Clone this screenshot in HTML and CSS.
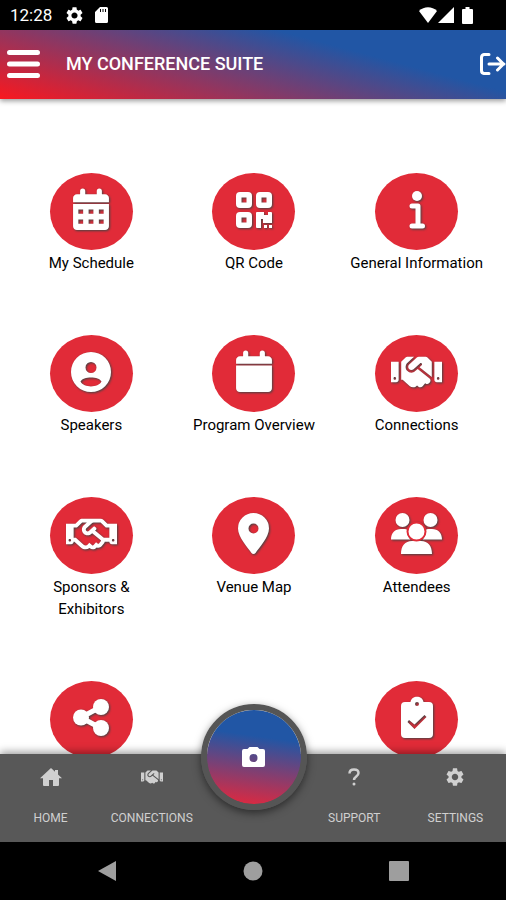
FILE: index.html
```
<!DOCTYPE html>
<html lang="en">
<head>
    <meta charset="UTF-8">
    <meta name="viewport" content="width=device-width, initial-scale=1">
    <title>My Conference Suite</title>
    <link rel="stylesheet" href="styles.css">
</head>
<body>

<!-- shared icons -->
<svg class="sprite" aria-hidden="true">
    <symbol id="gear" viewBox="2 2 20 20">
        <path d="M19.14 12.94c.04-.3.06-.61.06-.94 0-.32-.02-.64-.07-.94l2.03-1.58c.18-.14.23-.41.12-.61l-1.92-3.32c-.12-.22-.37-.29-.59-.22l-2.39.96c-.5-.38-1.03-.7-1.62-.94l-.36-2.54c-.04-.24-.24-.41-.48-.41h-3.84c-.24 0-.43.17-.47.41l-.36 2.54c-.59.24-1.13.57-1.62.94l-2.39-.96c-.22-.08-.47 0-.59.22L2.74 8.87c-.12.21-.08.47.12.61l2.03 1.58c-.05.3-.09.63-.09.94s.02.64.07.94l-2.03 1.58c-.18.14-.23.41-.12.61l1.92 3.32c.12.22.37.29.59.22l2.39-.96c.5.38 1.03.7 1.62.94l.36 2.54c.05.24.24.41.48.41h3.84c.24 0 .44-.17.47-.41l.36-2.54c.59-.24 1.13-.56 1.62-.94l2.39.96c.22.08.47 0 .59-.22l1.92-3.32c.12-.22.07-.47-.12-.61l-2.01-1.58zM12 15.6c-1.98 0-3.6-1.62-3.6-3.6s1.62-3.6 3.6-3.6 3.6 1.62 3.6 3.6-1.62 3.6-3.6 3.6z"/>
    </symbol>
    <symbol id="handshake" viewBox="0 56 640 400">
        <path d="M434.7 64h-85.9c-8 0-15.7 3-21.6 8.4l-98.3 90c-.1.1-.2.3-.3.4-16.6 15.6-16.3 40.5-2.1 56 12.7 13.9 39.4 17.6 56.1 2.7.1-.1.3-.1.4-.2l79.9-73.2c6.5-5.9 16.7-5.5 22.6 1 6 6.5 5.5 16.6-1 22.6l-26.1 23.9L504 313.8c2.9 2.4 5.5 5 7.9 7.7V128l-54.6-54.6c-5.9-6-14.1-9.4-22.6-9.4zM544 128.2v223.9c0 17.7 14.3 32 32 32h64V128.2h-96zm48 223.9c-8.8 0-16-7.2-16-16s7.2-16 16-16 16 7.2 16 16-7.2 16-16 16zM0 384h64c17.7 0 32-14.3 32-32V128.2H0V384zm48-63.9c8.8 0 16 7.2 16 16s-7.2 16-16 16-16-7.2-16-16c0-8.9 7.2-16 16-16zm435.9 18.6L334.6 217.5l-30 27.5c-29.7 27.1-75.2 24.5-101.7-4.4-26.9-29.4-24.8-74.9 4.4-101.7L289.1 64h-83.8c-8.5 0-16.6 3.4-22.6 9.4L128 128v223.9h18.3l90.5 81.9c27.4 22.3 67.7 18.1 90-9.3l.2-.2 17.9 15.5c15.9 13 39.4 10.5 52.3-5.4l31.4-38.6 5.4 4.4c13.7 11.1 33.9 9.1 45-4.7l9.5-11.7c11.2-13.8 9.1-33.9-4.6-45.1z"/>
    </symbol>
</svg>

<div class="status-bar">
    <span class="time">12:28</span>
    <svg class="status-gear" width="17" height="17"><use href="#gear"/></svg>
    <svg width="13" height="16" viewBox="0 0 13 16"><path fill-rule="evenodd" d="M5 0h6.500a1.500 1.500 0 0 1 1.500 1.500v13a1.500 1.500 0 0 1-1.500 1.500h-10A1.500 1.500 0 0 1 0 14.500V5zM5 2v3h1V2zM7.500 2v3h1V2zM10 2v3h1V2z"/></svg>
    <div class="signals">
        <svg width="18" height="16" viewBox="0 0 18 16"><path d="M0 4C5-1 13-1 18 4L9 16z"/></svg>
        <svg width="16" height="16" viewBox="0 0 16 16"><path d="M16 0v16H0z"/></svg>
        <svg class="battery" width="11" height="17" viewBox="0 0 11 17"><path d="M3.500 0h4v2H10a1 1 0 0 1 1 1v13a1 1 0 0 1-1 1H1a1 1 0 0 1-1-1V3a1 1 0 0 1 1-1h2.500z"/></svg>
    </div>
</div>

<header class="header">
    <button class="icon-button" aria-label="Menu">
        <svg width="33" height="30" viewBox="0 0 33 30"><path class="line" stroke-width="5" d="M2.500 3.500h28M2.500 15h28M2.500 26.500h28"/></svg>
    </button>
    <h1>MY CONFERENCE SUITE</h1>
    <button class="icon-button" aria-label="Log out">
        <svg width="26" height="22" viewBox="0 0 26 22"><path class="line" stroke-width="3" d="M9 1.500H4A3 3 0 0 0 1.500 4.500v13a3 3 0 0 0 2.500 3h5M9 11h15M17.500 5l6 6-6 6"/></svg>
    </button>
</header>

<main class="content">
    <nav class="menu">
        <a class="item" href="#schedule">
            <span class="circle">
                <svg width="36" height="41" viewBox="0 0 448 512"><path fill-rule="evenodd" d="M0 464c0 26.500 21.500 48 48 48h352c26.500 0 48-21.500 48-48V188H0zM66 256h60v52H66zM194 256h60v52h-60zM322 256h60v52h-60zM66 382h60v52H66zM194 382h60v52h-60zM322 382h60v52h-60zM400 64h-40V26a32 32 0 0 0-64 0v38H152V26a32 32 0 0 0-64 0v38H48C21.500 64 0 85.500 0 112v52h448v-52c0-26.500-21.500-48-48-48z"/></svg>
            </span>
            <span class="name">My Schedule</span>
        </a>
        <a class="item" href="#qr">
            <span class="circle">
                <svg width="36" height="36" viewBox="0 0 36 36"><path fill-rule="evenodd" d="M4 0h8a4 4 0 0 1 4 4v8a4 4 0 0 1-4 4H4a4 4 0 0 1-4-4V4a4 4 0 0 1 4-4zM5.500 5.500v5h5v-5zM24 0h8a4 4 0 0 1 4 4v8a4 4 0 0 1-4 4h-8a4 4 0 0 1-4-4V4a4 4 0 0 1 4-4zM25.500 5.500v5h5v-5zM4 20h8a4 4 0 0 1 4 4v8a4 4 0 0 1-4 4H4a4 4 0 0 1-4-4v-8a4 4 0 0 1 4-4zM5.500 25.500v5h5v-5zM21 20h7v3h4v-3h3a1 1 0 0 1 1 1v10h-9v-4h-2v9h-4a1 1 0 0 1-1-1V21a1 1 0 0 1 1-1zM28 33h3v3h-3zM33 33h3v3h-3z"/></svg>
            </span>
            <span class="name">QR Code</span>
        </a>
        <a class="item" href="#info">
            <span class="circle">
                <svg width="16" height="38" viewBox="0 0 16 38"><circle cx="8" cy="5" r="5"/><path class="line" stroke-width="5" d="M3 15h6v20M3 35h10.500"/></svg>
            </span>
            <span class="name">General Information</span>
        </a>
        <a class="item" href="#speakers">
            <span class="circle">
                <svg width="40" height="40" viewBox="0 0 40 40"><path fill-rule="evenodd" d="M20 0a20 20 0 1 0 0 40 20 20 0 0 0 0-40zM20 10a5.500 5.500 0 1 1 0 11 5.500 5.500 0 0 1 0-11zM9.500 29.500C12 24 28 24 30.500 29.500 27 36 13 36 9.500 29.500z"/></svg>
            </span>
            <span class="name">Speakers</span>
        </a>
        <a class="item" href="#program">
            <span class="circle">
                <svg width="36" height="41" viewBox="0 0 448 512"><path d="M0 464c0 26.500 21.500 48 48 48h352c26.500 0 48-21.500 48-48V180H0zM400 64h-40V26a32 32 0 0 0-64 0v38H152V26a32 32 0 0 0-64 0v38H48C21.500 64 0 85.500 0 112v46h448v-46c0-26.500-21.500-48-48-48z"/></svg>
            </span>
            <span class="name">Program Overview</span>
        </a>
        <a class="item" href="#connections">
            <span class="circle">
                <svg width="51" height="32"><use href="#handshake"/></svg>
            </span>
            <span class="name">Connections</span>
        </a>
        <a class="item" href="#sponsors">
            <span class="circle">
                <svg width="51" height="32" viewBox="0 56 640 400"><path d="M519.200 127.900l-47.600-47.600A56.252 56.252 0 0 0 432 64H205.200c-14.800 0-29.100 5.900-39.600 16.300L118 127.900H0v255.700h64c17.600 0 31.800-14.200 31.900-31.700h9.100l84.600 76.400c30.900 25.100 73.800 25.700 105.600 3.800 12.500 10.800 26 15.900 41.100 15.900 18.200 0 35.300-7.400 48.800-24 22.100 8.700 48.200 2.600 64-16.800l26.200-32.300c5.600-6.900 9.100-14.800 10.900-23h57.900c.1 17.500 14.400 31.700 31.900 31.700h64V127.900H519.200zM48 351.600c-8.800 0-16-7.200-16-16s7.200-16 16-16 16 7.200 16 16c0 8.900-7.200 16-16 16zm390-6.900l-26.100 32.200c-2.800 3.400-7.800 4-11.300 1.200l-23.900-19.400-30 36.500c-6 7.300-15 4.800-18 2.400l-36.800-31.500-15.600 19.200c-13.900 17.100-39.200 19.700-55.300 6.600l-97.300-88H96V175.800h41.900l61.700-61.600c2-.8 3.700-1.500 5.700-2.300H262l-38.700 35.500c-29.400 26.900-31.100 72.300-4.400 101.300 14.800 16.200 61.200 41.200 101.500 4.400l8.200-7.500 108.200 87.800c3.400 2.800 3.900 7.900 1.200 11.300zm106-40.800h-69.200c-2.300-2.800-4.900-5.400-7.700-7.700l-102.700-83.400 12.500-11.400c6.500-6 7-16.100 1-22.600L367 167.100c-6-6.500-16.100-6.900-22.600-1l-55.200 50.600c-9.500 8.700-25.700 9.400-34.600 0-9.300-9.900-8.500-25.100 1.200-33.900l65.600-60.100c7.400-6.800 17-10.500 27-10.500l83.700-.2c2.100 0 4.100.8 5.500 2.300l61.700 61.600H544v128zm48 47.700c-8.800 0-16-7.200-16-16s7.200-16 16-16 16 7.200 16 16c0 8.900-7.200 16-16 16z"/></svg>
            </span>
            <span class="name">Sponsors &amp;<br>Exhibitors</span>
        </a>
        <a class="item" href="#venue">
            <span class="circle">
                <svg width="31" height="41" viewBox="0 0 31 41"><path fill-rule="evenodd" d="M15.500 0A15.500 15.500 0 0 0 0 15.500C0 24 10 35 13.500 40a2.500 2.500 0 0 0 4 0C21 35 31 24 31 15.500A15.500 15.500 0 0 0 15.500 0zM15.500 10.500a5 5 0 1 1 0 10 5 5 0 0 1 0-10z"/></svg>
            </span>
            <span class="name">Venue Map</span>
        </a>
        <a class="item" href="#attendees">
            <span class="circle">
                <svg width="51" height="41" viewBox="0 0 51 41"><circle cx="11.500" cy="7" r="7"/><circle cx="39.500" cy="7" r="7"/><path d="M0 26.500C0 20 4 16 10 16h3c1.500 0 2.500.2 3.500.7-.6 4 .5 7.300 3 9.800zM51 26.500C51 20 47 16 41 16h-3c-1.500 0-2.500.2-3.500.7.6 4-.5 7.300-3 9.800zM10 41c0-8 4-13 11-13h9c7 0 11 5 11 13z"/><circle class="front-head" cx="25.500" cy="18.500" r="9"/></svg>
            </span>
            <span class="name">Attendees</span>
        </a>
        <a class="item" href="#share" aria-label="Share">
            <span class="circle">
                <svg width="36" height="37" viewBox="0 0 36 37"><path class="line" stroke-width="5" d="M27.500 8L8 18.500l19.500 10.500"/><circle cx="8" cy="18.500" r="8"/><circle cx="28" cy="8" r="8"/><circle cx="28" cy="29" r="8"/></svg>
            </span>
        </a>
        <a class="item last" href="#survey" aria-label="Survey">
            <span class="circle">
                <svg width="32" height="41" viewBox="0 0 32 41"><path fill-rule="evenodd" d="M4 5h5.500c1-7 12-7 13 0H28a4 4 0 0 1 4 4v28a4 4 0 0 1-4 4H4a4 4 0 0 1-4-4V9a4 4 0 0 1 4-4zM16 5a2 2 0 1 0 0 4 2 2 0 0 0 0-4zM8 23l-1.500 2 7 7L25.500 20l-2-2-10 9.500z"/></svg>
            </span>
        </a>
    </nav>
</main>

<footer class="tabs">
    <a class="tab" href="#home">
        <svg width="22" height="18" viewBox="0 0 22 18"><path d="M11 0l4 3.700V2h3v4.500l4 3.700h-3V17a1 1 0 0 1-1 1h-5v-6H9v6H4a1 1 0 0 1-1-1v-6.800H0z"/></svg>
        <span>HOME</span>
    </a>
    <a class="tab" href="#connections">
        <svg width="22" height="18"><use href="#handshake"/></svg>
        <span>CONNECTIONS</span>
    </a>
    <div class="camera-slot">
        <button class="camera" aria-label="Camera">
            <svg width="23" height="20" viewBox="0 0 23 20"><path fill-rule="evenodd" d="M7.500 0h8l2 2H21a2 2 0 0 1 2 2v14a2 2 0 0 1-2 2H2a2 2 0 0 1-2-2V4a2 2 0 0 1 2-2h3.500zM11.500 7a4 4 0 1 0 0 8 4 4 0 0 0 0-8z"/></svg>
        </button>
    </div>
    <a class="tab" href="#support">
        <svg width="12" height="18" viewBox="0 0 12 18"><path class="line butt" stroke-width="2.500" d="M1.500 5.500C1.500 3 3 1.500 6 1.500s4.500 1.500 4.500 3.500c0 3.500-4.500 3.500-4.500 7"/><circle cx="6" cy="16" r="1.500"/></svg>
        <span>SUPPORT</span>
    </a>
    <a class="tab" href="#settings">
        <svg width="18" height="18"><use href="#gear"/></svg>
        <span>SETTINGS</span>
    </a>
</footer>

<div class="system-nav">
    <button aria-label="Back"><svg width="18" height="20" viewBox="0 0 18 20"><path d="M18 0v20L0 10z"/></svg></button>
    <button aria-label="Home screen"><svg width="20" height="20" viewBox="0 0 20 20"><circle cx="10" cy="10" r="9.500"/></svg></button>
    <button aria-label="Recent apps"><svg width="20" height="20" viewBox="0 0 20 20"><rect width="20" height="20" rx="1"/></svg></button>
</div>

</body>
</html>
```
FILE: styles.css
```
* {
    box-sizing: border-box;
}

body {
    margin: 0;
    height: 100vh;
    display: flex;
    flex-direction: column;
    font-family: Roboto, sans-serif;
    background: white;
    color: black;
}

a {
    color: inherit;
    text-decoration: none;
}

button {
    border: 0;
    padding: 0;
    background: none;
    color: inherit;
    cursor: pointer;
}

svg {
    display: block;
    fill: currentColor;
}

.line {
    fill: none;
    stroke: currentColor;
    stroke-linecap: round;
    stroke-linejoin: round;
}

.butt {
    stroke-linecap: butt;
}

.sprite {
    position: absolute;
    width: 0;
    height: 0;
}

/* phone status bar */
.status-bar {
    flex: none;
    height: 30px;
    padding: 0 33px 0 10px;
    display: flex;
    align-items: center;
    background: black;
    color: white;
}

.status-bar .time {
    font-size: 17px;
    line-height: 30px;
}

.status-bar .status-gear {
    margin: 0 12px 0 14px;
}

.status-bar .signals {
    margin-left: auto;
    display: flex;
    gap: 1px;
}

.status-bar .battery {
    margin-left: 7px;
}

.header {
    flex: none;
    height: 69px;
    padding: 0 0 2px 7px;
    display: flex;
    align-items: center;
    background: linear-gradient(15deg, #f9181f, #2156a5 70%);
    color: white;
    box-shadow: 0 2px 5px rgba(0, 0, 0, 0.4);
    z-index: 1;
}

.header h1 {
    flex: 1;
    margin: 0 0 0 26px;
    font-size: 18px;
    font-weight: 500;
}

/* grid of round buttons */
.content {
    flex: 1;
    min-height: 0;
    overflow: hidden;
}

.menu {
    display: grid;
    grid-template-columns: repeat(3, 1fr);
    row-gap: 61px;
    padding: 74px 8px 74px 10px;
}

.item {
    display: flex;
    flex-direction: column;
    align-items: center;
    gap: 2px;
}

.item.last {
    grid-column: 3;
}

.circle {
    width: 83px;
    height: 77px;
    padding-bottom: 4px;
    border-radius: 50%;
    display: flex;
    align-items: center;
    justify-content: center;
    background: #e12b38;
    color: white;
}

.circle svg {
    overflow: visible;
    filter: drop-shadow(1px 1px 1px #444);
}

.front-head {
    stroke: #e12b38;
    stroke-width: 2px;
}

.name {
    font-size: 15px;
    line-height: 22px;
    text-align: center;
}

.tabs {
    flex: none;
    height: 88px;
    display: grid;
    grid-template-columns: repeat(5, 1fr);
    background: #585858;
    color: #d0d0d0;
    box-shadow: 0 -2px 8px rgba(0, 0, 0, 0.4);
    z-index: 1;
}

.tab {
    padding-top: 14px;
    display: flex;
    flex-direction: column;
    align-items: center;
    gap: 24px;
    font-size: 12px;
    line-height: 16px;
}

.camera-slot {
    position: relative;
}

/* sticks out above the tab bar */
.camera {
    position: absolute;
    top: -50px;
    left: 50%;
    margin-left: -52px;
    width: 106px;
    height: 106px;
    border: 6px solid #555;
    border-radius: 50%;
    display: flex;
    align-items: center;
    justify-content: center;
    background: linear-gradient(8deg, #e8263a, #2156a5 70%) padding-box;
    color: white;
    box-shadow: 0 3px 8px rgba(0, 0, 0, 0.5);
}

.system-nav {
    flex: none;
    height: 58px;
    display: grid;
    grid-template-columns: repeat(3, 146px);
    justify-content: center;
    background: black;
    color: #9e9e9e;
    z-index: 1;
}

.system-nav button {
    display: flex;
    align-items: center;
    justify-content: center;
}
```
